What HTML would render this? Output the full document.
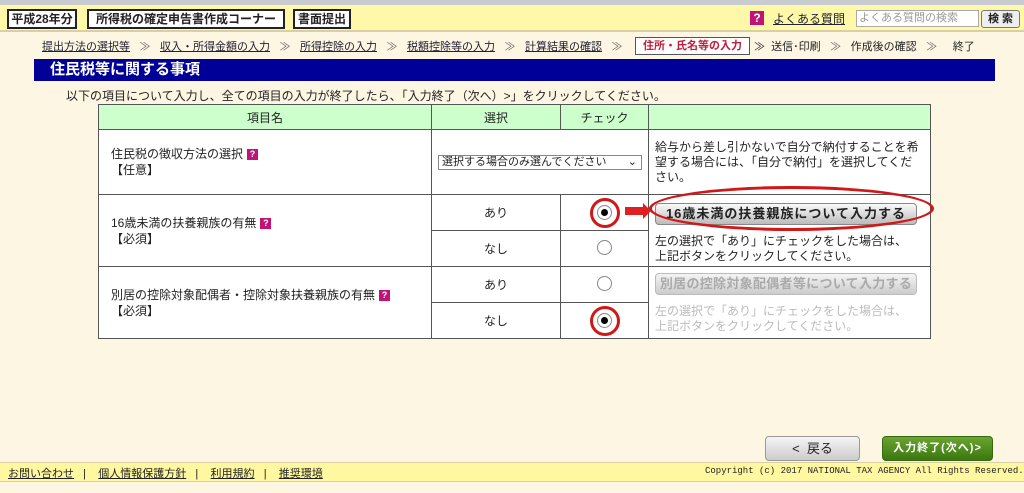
<!DOCTYPE html>
<html><head><meta charset="utf-8"><style>
*{margin:0;padding:0;box-sizing:border-box}
body{width:1024px;height:493px;background:#fdf6e3;font-family:"Liberation Sans","Noto Sans CJK JP",sans-serif;font-size:12px;color:#222;position:relative;overflow:hidden}
.a{position:absolute}
.top{left:0;top:0;width:1024px;height:5px;background:#c8ccd0}
.hdr{left:0;top:5px;width:1024px;height:27px;background:#fff8a8;border-bottom:2px solid #d8d0a0}
.bx{top:9px;height:20px;border:2px solid #222;background:#fff;font-weight:bold;font-size:12px;line-height:16px;text-align:center;white-space:nowrap;overflow:hidden}
.crumb{top:38px;font-size:11px;white-space:nowrap}
.crumb u{color:#223}
.gt{color:#666;margin:0 9.5px}
.bar{left:34px;top:59px;width:961px;height:22px;background:#000099;color:#fff;font-weight:bold;font-size:15px;line-height:22px;padding-left:16px}
table{position:absolute;left:98px;top:104px;border-collapse:collapse;background:#fff}
td{border:1px solid #555;font-size:12px}
th{border:1px solid #555;background:#ccffcc;font-weight:normal;font-size:12px;height:25px}
.q{display:inline-block;width:11px;height:11px;background:#c0137a;color:#fff;font-size:9px;line-height:11px;text-align:center;font-weight:bold;vertical-align:1px;margin-left:4px}
.rad{display:inline-block;width:15px;height:15px;border:1px solid #888;border-radius:50%;background:#fff;position:relative}
.rad.on::after{content:"";position:absolute;left:3px;top:3px;width:7px;height:7px;border-radius:50%;background:#000}
.ring{border:3px solid #d01818;border-radius:50%;width:30px;height:30px;display:flex;align-items:center;justify-content:center;margin:auto}
.c{text-align:center}
.btn{border:1px solid #888;border-radius:4px;font-weight:bold;font-size:13px;letter-spacing:1px;text-align:center;white-space:nowrap;overflow:hidden}
</style></head><body>
<div class="a top"></div>
<div class="a hdr"></div>
<div class="a bx" style="left:7px;width:70px">平成28年分</div>
<div class="a bx" style="left:87px;width:198px">所得税の確定申告書作成コーナー</div>
<div class="a bx" style="left:293px;width:58px">書面提出</div>
<div class="a" style="left:750px;top:11px;width:14px;height:14px;background:#c0137a;color:#fff;font-weight:bold;font-size:12px;line-height:14px;text-align:center">?</div>
<div class="a" style="left:773px;top:10px;font-size:12px;text-decoration:underline;color:#223">よくある質問</div>
<div class="a" style="left:856px;top:10px;width:123px;height:17px;background:#fff;border:1px solid #aaa;font-size:11px;color:#999;padding-left:2px;line-height:14px">よくある質問の検索</div>
<div class="a" style="left:981px;top:10px;width:39px;height:18px;background:#eee;border:1px solid #777;border-radius:3px;font-weight:bold;font-size:11px;text-align:center;line-height:16px">検 索</div>
<div class="a crumb" style="left:42px"><u>提出方法の選択等</u><span class="gt">≫</span><u>収入・所得金額の入力</u><span class="gt">≫</span><u>所得控除の入力</u><span class="gt">≫</span><u>税額控除等の入力</u><span class="gt">≫</span><u>計算結果の確認</u><span class="gt">≫</span></div>
<div class="a" style="left:635px;top:37px;width:115px;height:18px;border:1px solid #555;background:#fff;color:#c0203a;font-weight:bold;font-size:11px;text-align:center;line-height:16px">住所・氏名等の入力</div>
<div class="a crumb" style="left:754px">≫ &nbsp;送信･印刷<span class="gt">≫</span>作成後の確認<span class="gt">≫</span>&nbsp; 終了</div>
<div class="a bar">住民税等に関する事項</div>
<div class="a" style="left:66px;top:87px;font-size:12px">以下の項目について入力し、全ての項目の入力が終了したら、「入力終了（次へ）&gt;」をクリックしてください。</div>
<table>
<tr><th style="width:333px">項目名</th><th style="width:129px">選択</th><th style="width:88px">チェック</th><th style="width:282px"></th></tr>
<tr style="height:65px"><td style="padding-left:12px;line-height:16px">住民税の徴収方法の選択<span class="q">?</span><br>【任意】</td>
<td colspan="2" style="padding-left:6px"><div style="width:204px;height:15px;border:1px solid #888;font-size:11px;line-height:13px;padding-left:3px;position:relative">選択する場合のみ選んでください<span style="position:absolute;right:4px;top:0">⌄</span></div></td>
<td style="padding:4px 6px;font-size:12px;line-height:15px">給与から差し引かないで自分で納付することを希望する場合には、「自分で納付」を選択してください。</td></tr>
<tr style="height:36px"><td rowspan="2" style="padding-left:12px;line-height:16px">16歳未満の扶養親族の有無<span class="q">?</span><br>【必須】</td><td class="c">あり</td><td><div class="ring"><span class="rad on"></span></div></td>
<td rowspan="2" style="vertical-align:top;padding:0 6px;line-height:15px;position:relative">
<div class="btn" style="margin-top:8px;width:262px;height:22px;background:linear-gradient(#fafafa,#bbb);line-height:20px">16歳未満の扶養親族について入力する</div>
<div style="margin-top:9px">左の選択で「あり」にチェックをした場合は、<br>上記ボタンをクリックしてください。</div>
<div class="a" style="left:0;top:-9px;width:285px;height:45px;border:3px solid #d01818;border-radius:50%"></div>
<div class="a" style="left:-24px;top:12px;width:20px;height:8px;background:#e02020"></div>
<div class="a" style="left:-6px;top:8px;border-left:8px solid #e02020;border-top:8px solid transparent;border-bottom:8px solid transparent;width:0;height:0"></div>
</td></tr>
<tr style="height:36px"><td class="c">なし</td><td class="c"><span class="rad"></span></td></tr>
<tr style="height:36px"><td rowspan="2" style="padding-left:12px;line-height:16px">別居の控除対象配偶者・控除対象扶養親族の有無<span class="q">?</span><br>【必須】</td><td class="c">あり</td><td class="c"><span class="rad"></span></td>
<td rowspan="2" style="vertical-align:top;padding:0 6px;line-height:15px;color:#bbb">
<div class="btn" style="margin-top:6px;width:262px;height:22px;background:linear-gradient(#f4f4f4,#ccc);color:#aaa;border-color:#bbb;line-height:20px;letter-spacing:0.3px">別居の控除対象配偶者等について入力する</div>
<div style="margin-top:9px">左の選択で「あり」にチェックをした場合は、<br>上記ボタンをクリックしてください。</div></td></tr>
<tr style="height:36px"><td class="c">なし</td><td><div class="ring"><span class="rad on"></span></div></td></tr>
</table>
<div class="a" style="left:765px;top:436px;width:95px;height:25px;border:1px solid #999;border-radius:4px;background:linear-gradient(#f5f5f5,#ccc);text-align:center;line-height:23px;font-size:13px">&lt;&nbsp; 戻る</div>
<div class="a" style="left:882px;top:436px;width:111px;height:25px;border:1px solid #3a6a10;border-radius:4px;background:linear-gradient(#6aa430,#3a7810);color:#fff;font-weight:bold;text-align:center;line-height:23px;font-size:11px;letter-spacing:1px">入力終了(次へ)&gt;</div>
<div class="a" style="left:0;top:462px;width:1024px;height:20px;background:#fff8a0;border-top:1px solid #d8d0a0;border-bottom:1px solid #d8d0a0"></div>
<div class="a" style="left:8px;top:465px;font-size:11px;white-space:nowrap"><u>お問い合わせ</u>&nbsp;&nbsp;&nbsp;|&nbsp;&nbsp;&nbsp;&nbsp;<u>個人情報保護方針</u>&nbsp;&nbsp;&nbsp;|&nbsp;&nbsp;&nbsp;&nbsp;<u>利用規約</u>&nbsp;&nbsp;&nbsp;|&nbsp;&nbsp;&nbsp;&nbsp;<u>推奨環境</u></div>
<div class="a" style="left:705px;top:466px;font-family:'Liberation Mono',monospace;font-size:9px;white-space:nowrap">Copyright (c) 2017 NATIONAL TAX AGENCY All Rights Reserved.</div>
</body></html>
